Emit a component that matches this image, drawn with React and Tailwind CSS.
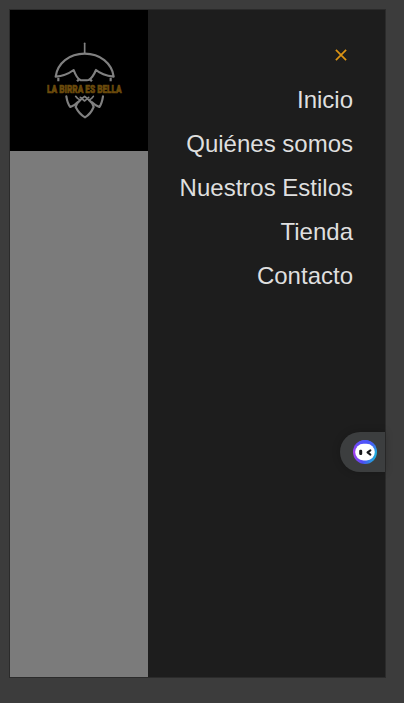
const links = ["Inicio", "Quiénes somos", "Nuestros Estilos", "Tienda", "Contacto"];

function Logo() {
  return (
    <svg
      className="h-[95px] w-[138px] overflow-visible"
      viewBox="-72 0 414 285"
      fill="none"
      stroke="#808080"
      strokeWidth="6.5"
      strokeLinejoin="round"
      strokeLinecap="round"
      aria-label="La Birra es Bella"
    >
      <path d="M152 28V58" strokeWidth="5" />
      <path d="M139 138C130 134 124 122 119 108C104 119 82 127 65 128C70 88 106 59 152 59C198 59 234 88 239 128C224 126 200 120 186 108C180 122 172 134 164 138C156 139 147 139 139 138" />
      <path d="M73 131V142M230 131V142M129 137L134 142M174 137L169 142" strokeLinecap="butt" />
      <path d="M97 187C99 200 102 211 109 219C118 216 125 211 130 205M207 187C205 200 202 211 196 219C187 216 180 211 174 205" />
      <path d="M125 187C129 193 134 197 139 198L152 187L165 198C171 196 175 192 178 187M139 190L152 201L164 190" strokeWidth="5" />
      <path d="M139 198C132 203 127 211 125 219C132 233 142 244 153 250C164 244 173 233 179 219C177 211 172 203 165 198" />
      <text
        transform="translate(151 178) scale(0.705 1)"
        textAnchor="middle"
        fill="#6b4b0c"
        stroke="#6b4b0c"
        strokeWidth="2"
        strokeLinejoin="miter"
        fontSize="35"
        fontWeight="900"
        fontFamily="Roboto, 'Liberation Sans', sans-serif"
      >
        LA BIRRA ES BELLA
      </text>
    </svg>
  );
}

function AssistantIcon() {
  return (
    <svg className="size-6" viewBox="0 0 24 24" aria-hidden="true">
      <defs>
        <linearGradient id="ring" x1="0" y1="0.6" x2="1" y2="0.8">
          <stop offset="0" stopColor="#a43df0" />
          <stop offset="0.45" stopColor="#4b4df5" />
          <stop offset="0.9" stopColor="#20a9dc" />
        </linearGradient>
        <linearGradient id="ringTop" x1="0" y1="0" x2="0" y2="1">
          <stop offset="0" stopColor="#4c55fb" />
          <stop offset="0.5" stopColor="#4c55fb" stopOpacity="0" />
        </linearGradient>
      </defs>
      <circle cx="12" cy="12" r="12" fill="url(#ring)" />
      <circle cx="12" cy="12" r="12" fill="url(#ringTop)" />
      <rect x="2.2" y="3.8" width="19.6" height="16.6" rx="8.3" fill="#fff" />
      <rect x="6.2" y="9.8" width="3" height="5.2" rx="1.2" fill="#17181c" />
      <path d="M17.4 10.4L14.5 12.4L17.4 14.6" fill="none" stroke="#17181c" strokeWidth="2" strokeLinecap="round" strokeLinejoin="round" />
    </svg>
  );
}

export default function App() {
  return (
    <div className="h-[703px] w-[404px] bg-[#3c3c3c] pt-[9px] pl-[9px] font-['Liberation_Sans',Arial,sans-serif]">
      <div className="relative flex h-[669px] w-[377px] border border-[#2b2b2b] bg-[#7b7b7b]">
        <div className="w-[138px] shrink-0">
          <header className="h-[141px] bg-black pt-6">
            <Logo />
          </header>
        </div>
        <nav className="flex flex-1 flex-col items-end bg-[#1d1d1d] pt-[33px] pr-8">
          <button className="flex size-6 items-center justify-center" aria-label="Cerrar">
            <svg className="size-6" viewBox="0 0 24 24" fill="none" stroke="#dc9414" strokeWidth="1.7">
              <path d="M6.9 6.9L17.1 17.1M17.1 6.9L6.9 17.1" />
            </svg>
          </button>
          <ul className="mt-[11px] text-right text-2xl text-[#dfdfdf]">
            {links.map((label) => (
              <li key={label} className="h-11 leading-[44px] whitespace-nowrap">
                <a href="#">{label}</a>
              </li>
            ))}
          </ul>
        </nav>
        <div className="absolute top-[422px] right-0 flex h-10 w-[45px] items-center rounded-l-full bg-[#3c3e3f] pl-[13px] shadow-[0_0_8px_rgba(0,0,0,0.2)]">
          <AssistantIcon />
        </div>
      </div>
    </div>
  );
}
